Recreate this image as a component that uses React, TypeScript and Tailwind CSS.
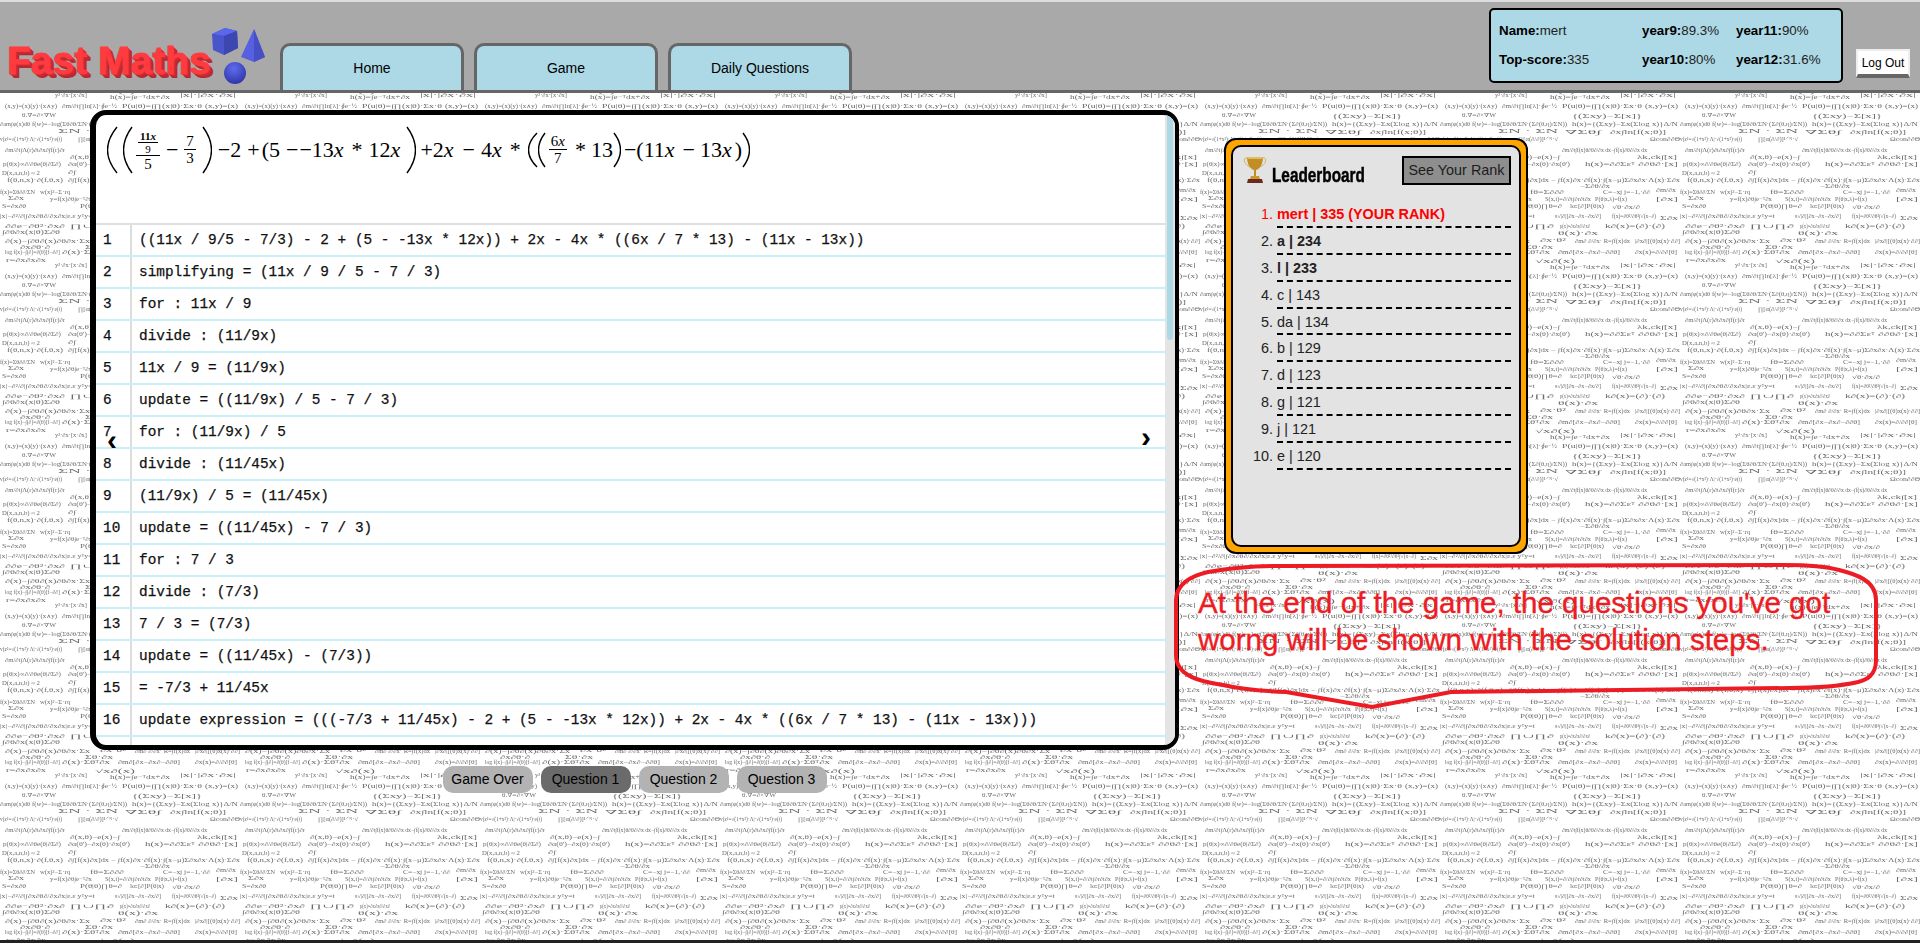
const solutionSteps = [
  "((11x / 9/5 - 7/3) - 2 + (5 - -13x * 12x)) + 2x - 4x * ((6x / 7 * 13) - (11x - 13x))",
  "simplifying = (11x / 9 / 5 - 7 / 3)",
  "for : 11x / 9",
  "divide : (11/9x)",
  "11x / 9 = (11/9x)",
  "update = ((11/9x) / 5 - 7 / 3)",
  "for : (11/9x) / 5",
  "divide : (11/45x)",
  "(11/9x) / 5 = (11/45x)",
  "update = ((11/45x) - 7 / 3)",
  "for : 7 / 3",
  "divide : (7/3)",
  "7 / 3 = (7/3)",
  "update = ((11/45x) - (7/3))",
  "= -7/3 + 11/45x",
  "update expression = (((-7/3 + 11/45x) - 2 + (5 - -13x * 12x)) + 2x - 4x * ((6x / 7 * 13) - (11x - 13x)))",
  "",
];

const leaders = [
  { name: "mert | 335 (YOUR RANK)", tone: "you" },
  { name: "a | 234", tone: "top" },
  { name: "l | 233", tone: "top" },
  { name: "c | 143" },
  { name: "da | 134" },
  { name: "b | 129" },
  { name: "d | 123" },
  { name: "g | 121" },
  { name: "j | 121" },
  { name: "e | 120" },
];

// scribbled formulas of the wallpaper, placed inside one 240x170 tile: x, y, width, text
const scribbles: [number, number, number, string][] = [
  [2, 5, 38, "D(x,a,n,b) ≈ 2"],
  [68, 4, 8, "∂∫"],
  [7, 12, 56, "f(θ,n,x)·∂(f,θ,x)"],
  [68, 12, 172, "∂∫[f(x)∂x]dx − ∫f(x)∂x·∂f(x)·∫(x−μ)Σ∂x∂x·Λ(x)·Σ∂x"],
  [140, 18, 30, "−Σ∂θ/∂x"],
  [0, 24, 35, "f(x)=Σθ∂∂/ΣN"],
  [40, 24, 30, "w(x)²−Σ·rq"],
  [90, 24, 34, "fθ=Σ∂∂∂"],
  [163, 24, 47, "C=−xj j=−1,·∂∂"],
  [216, 22, 20, "∂m/∂x"],
  [8, 30, 16, "Σ∂x"],
  [50, 31, 42, "y=f(x)∂θ∫e⁻ᵀ∂x"],
  [105, 31, 46, "S(x,t)=∂/∂t∫∂r∂t∂x"],
  [155, 31, 32, "P(θ|x,λ)=f(x)"],
  [216, 31, 22, "[∂x]"],
  [2, 38, 24, "S=∂x∂θ"],
  [80, 38, 42, "P(θ|θ)∏θ=∂"],
  [130, 38, 34, "lα:[∂]P(θ|x)"],
  [172, 39, 28, "√θ·∂x/∂"],
  [0, 48, 95, "|x|−∂²/∂|∫∂x∂θ∂/∂x∂x|ε.ε yᵀy=t"],
  [115, 48, 46, "s√|∂|[∂x−∂x−∂x/∂]"],
  [172, 48, 44, "f(x)=∂θ²/∂θ²∫√(x−∂)"],
  [220, 50, 18, "Σ∂x"],
  [5, 58, 60, "∂∂e⁻∂θ²·∂x∂"],
  [70, 58, 44, "∏∪∏∂"],
  [120, 58, 30, "p(x)=∂x∂x∂/∂x∂"],
  [165, 58, 60, "k∂(x)=(∂)·(∂)"],
  [2, 64, 58, "∫∂θ∂x(x|θ)Σ∂θ"],
  [118, 65, 40, "θ(x)·∂x"],
  [5, 73, 85, "∂(x)−∫∂θ∂(x)∂θ∂x·Σx"],
  [100, 72, 26, "∂x·θ²"],
  [135, 73, 55, "∂m∂ ∂/∂x· R=∫f(x)dx"],
  [195, 73, 45, "|∂x∂|[(θ)x(x)·∂∂]"],
  [20, 79, 30, "∂x∂θ·∂"],
  [85, 79, 28, "Σθ·∂x"],
  [5, 84, 55, "log f(x)−∫(∂)=∂(θ)[f−∂∂]"],
  [62, 84, 48, "∂(x)·Σθᵀ∂x"],
  [118, 84, 62, "∂m∂[∂x−∂x∂−∂∂θ]"],
  [195, 84, 42, "∂x(x)=∂/∂∂[θ]"],
  [6, 92, 40, "r=∂x∂x∂x"],
  [55, 97, 32, "y²·∂x·[x·∂x]"],
  [95, 93, 40, "√x∂(x)"],
  [110, 99, 60, "h(x)=∫e⁻ᵀdx+∂x"],
  [180, 97, 56, "|x|·|∂x·∂x|"],
  [5, 108, 52, "(x,y)=(x)(y)·(x∧y)"],
  [62, 108, 55, "∂m/∂t∏ln[λ]·∮e⁻½"],
  [122, 108, 80, "P(u|θ)=∫∏(x|θ)·Σx·θ"],
  [205, 108, 33, "(x,y)=(x)"],
  [22, 117, 34, "θ.∇=∂×∇W"],
  [132, 118, 70, "{(Σxy)−Σ[x]}"],
  [0, 126, 30, "∂am∫φ(x)dθ"],
  [32, 126, 95, "f(w)=−log(Σθ∂θ/ΣN·(Σ∂(θ,η)/ΣN))"],
  [132, 126, 106, "h(x)={(Σxy)−Σx(Σlog x)}Δ/N"],
  [58, 133, 60, "ΣN · ΣN"],
  [125, 134, 36, "∇Σθ∫"],
  [170, 134, 56, "∂x∫ln[f(x;θ)]"],
  [0, 141, 62, "v(z²=√(1+x²)·Λ|·√(1+x²)·e(t)"],
  [78, 141, 40, "∏[α(∂/∂)]¹ᐟᴺ·√"],
  [210, 141, 30, "Ωcon∂∂Θ"],
  [5, 152, 60, "∂m/∂t∫Λ(r)∂t∂x∂∫f(r)∂r"],
  [122, 152, 85, "∂m/∂t∫f(x)θ∂θ∂/∂x dx−∫f(x)∂θ∂/∂x dx"],
  [70, 159, 50, "∂(x,θ)−e(x)−∫"],
  [197, 159, 40, "λk,ck∫[x]"],
  [3, 166, 58, "p(θ|x)∝∂/∂θe(θ|∂Σ∂)"],
  [68, 166, 62, "∂α(θ')−∂x(θ)·∂x(θ')"],
  [145, 166, 50, "h(x)=∂∂Σεᵀ"],
  [198, 166, 40, "∂∂θ∂·[x]"],
];

function MathWallpaper() {
  return (
    <svg className="absolute inset-0 -z-10 h-full w-full blur-[0.4px]" aria-hidden="true">
      <defs>
        <pattern id="scribbles" width="240" height="170" patternUnits="userSpaceOnUse">
          {scribbles.map(([x, y, w, t], i) => (
            <text
              key={i}
              x={x}
              y={y}
              textLength={w}
              lengthAdjust="spacingAndGlyphs"
              fontSize="5.5"
              fill="#6a6a6a"
              fontFamily="'Liberation Serif', 'DejaVu Serif', serif"
            >
              {t}
            </text>
          ))}
        </pattern>
      </defs>
      <rect width="100%" height="100%" fill="#ffffff" />
      <rect width="100%" height="100%" fill="url(#scribbles)" />
    </svg>
  );
}

function LogoShapes() {
  return (
    <svg width="56" height="58" viewBox="0 0 56 58" className="absolute left-[210px] top-[25px]">
      <defs>
        <radialGradient id="ball" cx="0.45" cy="0.3" r="0.8">
          <stop offset="0" stopColor="#5f6cf0" />
          <stop offset="1" stopColor="#2a2f9c" />
        </radialGradient>
      </defs>
      <path d="M2 7 L14 28 L28 21 L27 4 L15 1 Z" fill="#4450c8" />
      <path d="M2 7 L15 1 L27 4 L14 9 Z" fill="#5a66ee" />
      <path d="M14 9 L27 4 L28 21 L14 28 Z" fill="#3c47b0" />
      <path d="M2 7 L14 9 L14 28 L3 23 Z" fill="#4a55cc" />
      <path d="M44 2 L31 30 L44 35 L55 30 Z" fill="#5660e0" />
      <path d="M44 2 L44 35 L55 30 Z" fill="#4650c4" />
      <circle cx="25" cy="46" r="11" fill="url(#ball)" />
    </svg>
  );
}

function Trophy() {
  return (
    <svg width="24" height="28" viewBox="0 0 24 28" className="shrink-0">
      <path d="M4 2 C0 1 0 8 7 11 M20 2 C24 1 24 8 17 11" fill="none" stroke="#d8b060" strokeWidth="1" />
      <path d="M4 1 H20 C20 8 17 13 13 14 L13 20 L11 20 L11 14 C7 13 4 8 4 1 Z" fill="#c28d22" />
      <path d="M4 1 H20 L19.5 3 H4.5 Z" fill="#e3bb60" />
      <path d="M8 20 H16 L17 23 H7 Z" fill="#c9972f" />
      <path d="M5 23 H19 L20 27 H4 Z" fill="#6b2a1c" />
    </svg>
  );
}

function Paren({ h, w, right }: { h: number; w: number; right?: boolean }) {
  return (
    <svg width={w} height={h} viewBox={`0 0 ${w} ${h}`} className="shrink-0">
      <path
        d={right ? `M1 1 Q${w * 2 - 2} ${h / 2} 1 ${h - 1}` : `M${w - 1} 1 Q${2 - w} ${h / 2} ${w - 1} ${h - 1}`}
        fill="none"
        stroke="#000"
        strokeWidth="1.4"
      />
    </svg>
  );
}

function Frac({ top, bottom, small }: { top: React.ReactNode; bottom: React.ReactNode; small?: boolean }) {
  return (
    <span className={`inline-flex flex-col items-center leading-none ${small ? "text-[11px]" : "text-[15px]"}`}>
      <span className="px-[2px]">{top}</span>
      <span className="h-[1px] w-full bg-black" />
      <span className="px-[2px] pt-[1px]">{bottom}</span>
    </span>
  );
}

function Formula() {
  return (
    <div className="flex h-[108px] items-start pl-[11px] pt-[11px] font-['Liberation_Serif',serif] text-[22px] leading-none text-black">
      <div className="flex h-[48px] items-center">
        <Paren h={48} w={11} />
        <span className="w-[5px]" />
        <Paren h={48} w={10} />
        <span className="w-[3px]" />
        <Frac
          top={<Frac small top={<b>11<i>x</i></b>} bottom="9" />}
          bottom="5"
        />
        <span className="mx-[6px]">−</span>
        <Frac top="7" bottom="3" />
        <span className="w-[6px]" />
        <Paren h={48} w={10} right />
        <span className="ml-[6px]">−2</span>
        <span className="ml-[6px]">+</span>
        <span className="ml-[2px]">(5</span>
        <span className="ml-[6px]">−</span>
        <span className="ml-[1px]">−13<i className="pr-[3px]">x</i></span>
        <span className="ml-[5px]">*</span>
        <span className="ml-[6px]">12<i className="pr-[3px]">x</i></span>
        <span className="ml-[3px]" />
        <Paren h={48} w={10} right />
        <span className="ml-[4px]">+2<i className="pr-[3px]">x</i></span>
        <span className="ml-[6px]">−</span>
        <span className="ml-[6px]">4<i className="pr-[3px]">x</i></span>
        <span className="ml-[5px]">*</span>
        <span className="w-[7px]" />
        <Paren h={36} w={10} />
        <Paren h={36} w={8} />
        <span className="w-[3px]" />
        <Frac top={<>6<i>x</i></>} bottom="7" />
        <span className="ml-[8px]">*</span>
        <span className="ml-[5px]">13</span>
        <Paren h={36} w={8} right />
        <span className="ml-[3px]">−(11<i className="pr-[3px]">x</i></span>
        <span className="ml-[5px]">−</span>
        <span className="ml-[5px]">13<i className="pr-[3px]">x</i>)</span>
        <Paren h={36} w={8} right />
      </div>
    </div>
  );
}

function SolutionPanel() {
  return (
    <div className="relative flex h-[640px] w-[1089px] overflow-hidden rounded-[16px] border-y-[5px] border-l-[6px] border-r-[4px] border-black bg-white">
      <div className="min-w-0 flex-1">
        <Formula />
        <div className="border-t-2 border-[#e0e0e0] font-['Liberation_Mono',monospace] text-[14.4px] text-[#111] [-webkit-text-stroke:0.25px_#111]">
          {solutionSteps.map((step, i) => (
            <div key={i} className="flex h-[32px] border-b-2 border-[#c8f0fb]">
              <div className="flex w-[36px] shrink-0 items-center border-r-2 border-[#dddddd] pl-[7px] pt-[1px]">
                {step ? i + 1 : ""}
              </div>
              <div className="flex items-center whitespace-nowrap pl-[7px] pt-[1px]">{step}</div>
            </div>
          ))}
        </div>
      </div>
      <div className="flex w-[10px] shrink-0 justify-center bg-[#e4e4e4]">
        <div className="h-[225px] w-[6px] rounded-b-[3px] bg-[#add8e6]" />
      </div>
      <span className="absolute left-[11px] top-[310px] font-['Liberation_Sans',sans-serif] text-[30px] font-bold leading-none text-black">‹</span>
      <span className="absolute right-[24px] top-[307px] font-['Liberation_Sans',sans-serif] text-[30px] font-bold leading-none text-black">›</span>
    </div>
  );
}

function Leaderboard() {
  return (
    <div className="h-[416px] w-[304px] rounded-[12px] border-2 border-black bg-[#ffa500] p-[5px]">
      <div className="h-full rounded-[10px] border-2 border-black bg-[#e3e3e3]">
        <div className="flex h-[54px] items-start pl-[10px] pr-[8px] pt-[9px]">
          <Trophy />
          <span className="ml-[5px] mt-[9px] inline-block origin-left scale-x-[0.73] text-[21px] font-bold leading-[20px] text-black [-webkit-text-stroke:0.5px_#000]">
            Leaderboard
          </span>
          <button className="ml-auto h-[29px] w-[109px] border-2 border-black bg-[#8e8e8e] text-[14.4px] leading-none text-[#1c1c1c]">
            See Your Rank
          </button>
        </div>
        <ol className="list-decimal pl-[44px] pr-[8px] text-[14.4px] text-[#222]">
          {leaders.map((l) => (
            <li
              key={l.name}
              className={`h-[26.9px] border-b-2 border-dashed border-black pt-[5px] leading-[17px] ${l.tone === "you" ? "text-[#ff0000]" : ""}`}
            >
              <span className={l.tone ? "font-bold" : ""}>{l.name}</span>
            </li>
          ))}
        </ol>
      </div>
    </div>
  );
}

function Callout() {
  return (
    <div className="relative -ml-[50px] mt-[9px] h-[146px] w-[704px] pl-[24px] pt-[21px]">
      <svg width="706" height="148" viewBox="1174 563 706 148" className="absolute left-0 top-0" fill="none">
        <path
          d="M1176 600 C1176 585 1190 576 1208 572 C1230 568 1255 566 1276 566 L1785 565 C1810 565 1828 567 1839 570 C1855 574 1876 580 1876 600 L1876 660 C1876 676 1866 680 1858 682 C1840 686 1815 688 1790 688 L1451 692 L1372 707 L1286 692 C1260 691 1240 689 1223 685 C1205 682 1176 678 1176 655 Z"
          stroke="#ed1c24"
          strokeWidth="4"
        />
      </svg>
      <p className="relative whitespace-nowrap text-[29.5px] leading-[37px] text-[#ed1c24] [-webkit-text-stroke:0.4px_#ed1c24]">
        At the end of the game, the questions you've got
        <br />
        worng will be shown with the solution steps.
      </p>
    </div>
  );
}

export default function App() {
  return (
    <div className="relative isolate h-[943px] overflow-hidden font-['Liberation_Sans',Arial,sans-serif] text-black">
      <MathWallpaper />
      <div className="h-[2px] bg-[#dcdcdc]" />
      <header className="relative flex h-[91px] items-start border-b-[3px] border-[#666666] bg-[#a9a9a9]">
        <div className="relative h-full w-[280px] shrink-0 pl-[7px] pt-[37px]">
          <span className="text-[39px] font-bold leading-[44px] text-[#ff3b40] [-webkit-text-stroke:0.8px_#ff3b40] [text-shadow:1px_1px_0_#d02c33,2px_2px_0_#c92a30,3px_3px_0_#b92a30,4px_4px_0_#b02a30]">
            Fast Maths
          </span>
          <LogoShapes />
        </div>
        <nav className="mt-[41px] flex gap-[10px]">
          {["Home", "Game", "Daily Questions"].map((tab) => (
            <div
              key={tab}
              className="flex h-[47px] w-[184px] items-center justify-center rounded-t-[10px] border-x-[3px] border-t-[3px] border-[#666666] bg-[#add8e6] text-[14px]"
            >
              {tab}
            </div>
          ))}
        </nav>
        <div className="ml-auto mt-[6px] grid h-[75px] w-[354px] grid-cols-[143px_94px_1fr] items-center rounded-[5px] border-2 border-black bg-[#add8e6] py-[6px] pl-[8px] text-[13.33px] text-[#222]">
          <div><b className="text-black">Name:</b>mert</div>
          <div><b className="text-black">year9:</b>89.3%</div>
          <div><b className="text-black">year11:</b>90%</div>
          <div><b className="text-black">Top-score:</b>335</div>
          <div><b className="text-black">year10:</b>80%</div>
          <div><b className="text-black">year12:</b>31.6%</div>
        </div>
        <button className="ml-[13px] mr-[10px] mt-[47px] h-[29px] w-[54px] border-x-2 border-t-2 border-b-[4px] border-x-[#eeeeee] border-t-[#eeeeee] border-b-[#666666] bg-white text-[12px] leading-none">
          Log Out
        </button>
      </header>
      <main className="flex pl-[90px]">
        <div className="mt-[17px] w-[1089px]">
          <SolutionPanel />
          <div className="mt-[16px] flex justify-center gap-[8px] text-[14px]">
            {["Game Over", "Question 1", "Question 2", "Question 3"].map((q) => (
              <div
                key={q}
                className={`flex h-[27px] w-[90px] items-center justify-center rounded-[10px] ${q === "Question 1" ? "bg-[#6b6b6b]" : "bg-[#b3b3b3]"}`}
              >
                {q}
              </div>
            ))}
          </div>
        </div>
        <div className="ml-[45px] mt-[45px]">
          <Leaderboard />
          <Callout />
        </div>
      </main>
      <div className="absolute inset-x-0 bottom-0 h-[3px] bg-[#222222]" />
    </div>
  );
}
